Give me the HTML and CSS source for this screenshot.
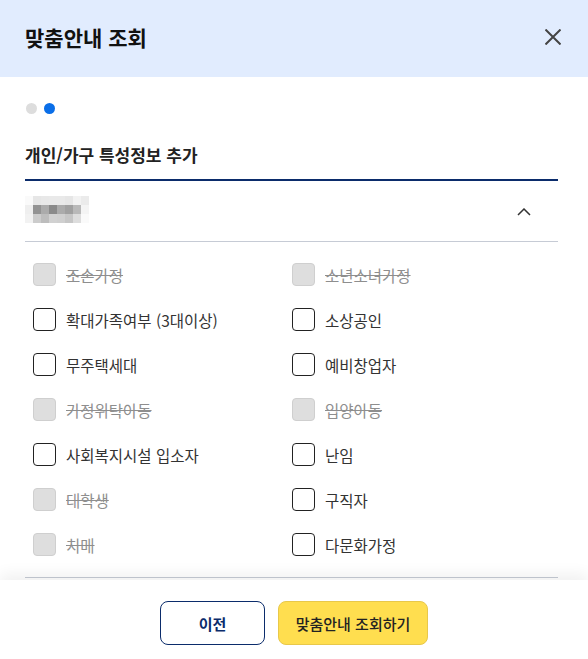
FILE: index.html
```html
<!DOCTYPE html>
<html lang="ko">
<head>
    <meta charset="UTF-8">
    <meta name="viewport" content="width=device-width, initial-scale=1.0">
    <title>맞춤안내 조회</title>
    <link rel="stylesheet" href="styles.css">
</head>
<body>
    <div class="modal">
        <div class="modal-header">
            <h1>맞춤안내 조회</h1>
            <button class="close-btn" aria-label="닫기">
                <svg width="16" height="16" viewBox="0 0 16 16"><path d="M0.5 0.5L15.5 15.5M15.5 0.5L0.5 15.5" stroke="#444" stroke-width="2" fill="none"/></svg>
            </button>
        </div>

        <div class="modal-body">
            <div class="steps">
                <span class="dot"></span>
                <span class="dot active"></span>
            </div>

            <h2 class="section-title">개인/가구 특성정보 추가</h2>

            <div class="acc-head">
                <!-- masked name -->
                <div class="mosaic">
                    <i style="background:#fafafa"></i><i style="background:#e6e6e6"></i><i style="background:#e8e8e8"></i><i style="background:#e9e9e9"></i><i style="background:#e9e9e9"></i><i style="background:#e6e6e6"></i><i style="background:#f2f2f2"></i><i style="background:#ebebeb"></i>
                    <i style="background:#efefef"></i><i style="background:#939393"></i><i style="background:#ababab"></i><i style="background:#8a8a8a"></i><i style="background:#ababab"></i><i style="background:#a0a0a0"></i><i style="background:#b9b9b9"></i><i style="background:#f4f4f4"></i>
                    <i style="background:#f2f2f2"></i><i style="background:#cccccc"></i><i style="background:#bdbdbd"></i><i style="background:#d1d1d1"></i><i style="background:#cfcfcf"></i><i style="background:#c6c6c6"></i><i style="background:#dddddd"></i><i style="background:#fafafa"></i>
                </div>
                <svg class="chevron" width="14" height="8" viewBox="0 0 14 8"><path d="M1 7L7 1L13 7" stroke="#333" stroke-width="1.5" fill="none"/></svg>
            </div>

            <div class="check-list">
                <label class="check disabled"><span class="box"></span>조손가정</label>
                <label class="check disabled"><span class="box"></span>소년소녀가정</label>
                <label class="check"><span class="box"></span>확대가족여부 (3대이상)</label>
                <label class="check"><span class="box"></span>소상공인</label>
                <label class="check"><span class="box"></span>무주택세대</label>
                <label class="check"><span class="box"></span>예비창업자</label>
                <label class="check disabled"><span class="box"></span>가정위탁아동</label>
                <label class="check disabled"><span class="box"></span>입양아동</label>
                <label class="check"><span class="box"></span>사회복지시설 입소자</label>
                <label class="check"><span class="box"></span>난임</label>
                <label class="check disabled"><span class="box"></span>대학생</label>
                <label class="check"><span class="box"></span>구직자</label>
                <label class="check disabled"><span class="box"></span>치매</label>
                <label class="check"><span class="box"></span>다문화가정</label>
            </div>
        </div>

        <div class="modal-footer">
            <button class="btn btn-prev">이전</button>
            <button class="btn btn-submit">맞춤안내 조회하기</button>
        </div>
    </div>
</body>
</html>
```

FILE: styles.css
```css
body {
    margin: 0;
    padding: 0;
    font-family: "Noto Sans CJK KR", "Noto Sans", sans-serif;
    color: #222;
    background: #fff;
}

.modal {
    width: 588px;
    height: 659px;
    display: flex;
    flex-direction: column;
    overflow: hidden;
}

.modal-header {
    height: 77px;
    flex-shrink: 0;
    background-color: #e1ecfe; /* light blue */
    display: flex;
    align-items: center;
    justify-content: space-between;
    padding: 0 27px 0 25px;
    box-sizing: border-box;
}

.modal-header h1 {
    margin: 0;
    font-size: 21px;
    font-weight: 700;
    color: #111;
    line-height: 1;
    padding-bottom: 2px;
}

.close-btn {
    border: none;
    background: none;
    padding: 0;
    width: 16px;
    height: 16px;
    cursor: pointer;
    display: flex;
    margin-top: -3px;
}

.modal-body {
    flex: 1;
    padding: 26px 30px 0 25px;
}

.steps {
    display: flex;
    gap: 7px;
    height: 11px;
    padding-left: 1px;
}

.dot {
    width: 11px;
    height: 11px;
    border-radius: 50%;
    background: #dddddd;
}

.dot.active {
    background: #0a6ee8;
}

.section-title {
    margin: 28px 0 0;
    font-size: 17px;
    font-weight: 700;
    line-height: 26px;
    color: #222;
    padding-bottom: 11px;
    border-bottom: 2px solid #0b2c6b; /* navy */
}

.acc-head {
    height: 60px;
    display: flex;
    align-items: center;
    justify-content: space-between;
    border-bottom: 1px solid #c6cbd5;
    padding-right: 27px;
}

.mosaic {
    display: grid;
    grid-template-columns: repeat(8, 8px);
    grid-auto-rows: 9px;
    margin-top: -3px;
}

.mosaic i {
    display: block;
}

.chevron {
    margin-top: 2px;
}

.check-list {
    display: grid;
    grid-template-columns: 259px 1fr;
    grid-auto-rows: 45px;
    padding: 10px 8px 10px;
    border-bottom: 1px solid #c6cbd5;
}

.check {
    display: flex;
    align-items: center;
    gap: 10px;
    font-size: 15.5px;
    color: #333;
    cursor: pointer;
}

.box {
    width: 23px;
    height: 23px;
    box-sizing: border-box;
    border: 1.5px solid #222;
    border-radius: 4px;
    background: #fff;
    flex-shrink: 0;
}

.check.disabled {
    color: #8e8e8e;
    text-decoration: line-through;
    cursor: default;
}

.check.disabled .box {
    background: #dedede;
    border: 1px solid #cfcfcf;
}

.modal-footer {
    height: 79px;
    flex-shrink: 0;
    background: #fff;
    display: flex;
    justify-content: center;
    align-items: flex-start;
    gap: 13px;
    padding-top: 21px;
    box-sizing: border-box;
    position: relative;
    box-shadow: 0 -6px 14px rgba(0, 0, 0, 0.06);
}

.btn {
    height: 44px;
    border-radius: 8px;
    font-family: inherit;
    font-size: 15px;
    font-weight: 700;
    cursor: pointer;
}

.btn-prev {
    width: 105px;
    background: #fff;
    border: 1px solid #0b2c6b;
    color: #0b2c6b;
}

.btn-submit {
    width: 150px;
    background: #ffde4f; /* yellow */
    border: 1px solid #e8c84a;
    color: #222;
    font-weight: 500;
}
```
